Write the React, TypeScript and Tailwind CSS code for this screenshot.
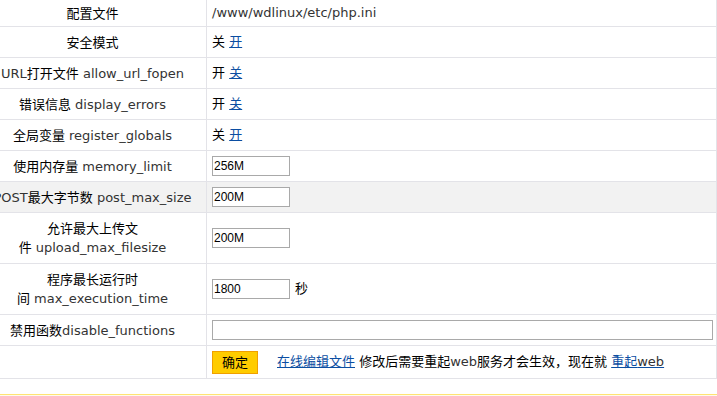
import type { ReactNode } from "react";

function En({ children }: { children: ReactNode }) {
  return <span className="text-[#333]">{children}</span>;
}

function Link({ children }: { children: ReactNode }) {
  return <a className="text-[#0b4ea2] underline cursor-pointer">{children}</a>;
}

function Row({
  label,
  children,
  h = "h-[31px]",
  gray = false,
}: {
  label: ReactNode;
  children: ReactNode;
  h?: string;
  gray?: boolean;
}) {
  return (
    <div className={`flex border-b border-[#e3e3e8] ${h} ${gray ? "bg-[#f2f2f2]" : "bg-white"}`}>
      <div className="flex w-[207px] shrink-0 items-center justify-center border-r border-[#e3e3e8] pr-[21px] text-center leading-[19px] whitespace-nowrap">
        <div>{label}</div>
      </div>
      <div className="flex flex-1 items-center gap-[5px] pl-[5px]">{children}</div>
    </div>
  );
}

function Field({ value, wide = false }: { value: string; wide?: boolean }) {
  return (
    <input
      readOnly
      defaultValue={value}
      className={`${wide ? "w-[501px]" : "w-[78px]"} h-[20px] border border-[#a9a9a9] bg-white px-px font-['Liberation_Sans',sans-serif] text-[12px] text-black outline-none`}
    />
  );
}

function Toggle({ on }: { on: boolean }) {
  return (
    <span>
      {on ? "开" : "关"} <Link>{on ? "关" : "开"}</Link>
    </span>
  );
}

export default function App() {
  return (
    <div className="h-[396px] w-[717px] overflow-hidden bg-white font-['DejaVu_Sans','Noto_Sans_CJK_SC',sans-serif] text-[13px] text-black">
      <div className="border-r border-[#e3e3e8]">
        <Row label="配置文件" h="h-[27px]">
          <En>/www/wdlinux/etc/php.ini</En>
        </Row>
        <Row label="安全模式">
          <Toggle on={false} />
        </Row>
        <Row
          label={
            <>
              <En>URL</En>打开文件 <En>allow_url_fopen</En>
            </>
          }
        >
          <Toggle on={true} />
        </Row>
        <Row
          label={
            <>
              错误信息 <En>display_errors</En>
            </>
          }
        >
          <Toggle on={true} />
        </Row>
        <Row
          label={
            <>
              全局变量 <En>register_globals</En>
            </>
          }
        >
          <Toggle on={false} />
        </Row>
        <Row
          label={
            <>
              使用内存量 <En>memory_limit</En>
            </>
          }
        >
          <Field value="256M" />
        </Row>
        <Row
          gray
          label={
            <>
              <En>POST</En>最大字节数 <En>post_max_size</En>
            </>
          }
        >
          <Field value="200M" />
        </Row>
        <Row
          h="h-[51px]"
          label={
            <>
              允许最大上传文
              <br />件 <En>upload_max_filesize</En>
            </>
          }
        >
          <Field value="200M" />
        </Row>
        <Row
          h="h-[51px]"
          label={
            <>
              程序最长运行时
              <br />间 <En>max_execution_time</En>
            </>
          }
        >
          <Field value="1800" />
          <span>秒</span>
        </Row>
        <Row
          label={
            <>
              禁用函数<En>disable_functions</En>
            </>
          }
        >
          <Field value="" wide />
        </Row>
        <Row label="" h="h-[33px]">
          <button className="h-[23px] w-[46px] border border-[#f0a000] bg-[#ffcc00] text-[13px] leading-none text-black">
            确定
          </button>
          <span className="ml-[14px]">
            <Link>在线编辑文件</Link> 修改后需要重起<En>web</En>服务才会生效，现在就{" "}
            <Link>
              重起<En>web</En>
            </Link>
          </span>
        </Row>
      </div>
      <div className="mt-[15px] h-10 border-t border-[#ffe373] bg-[#fffbea]" />
    </div>
  );
}
